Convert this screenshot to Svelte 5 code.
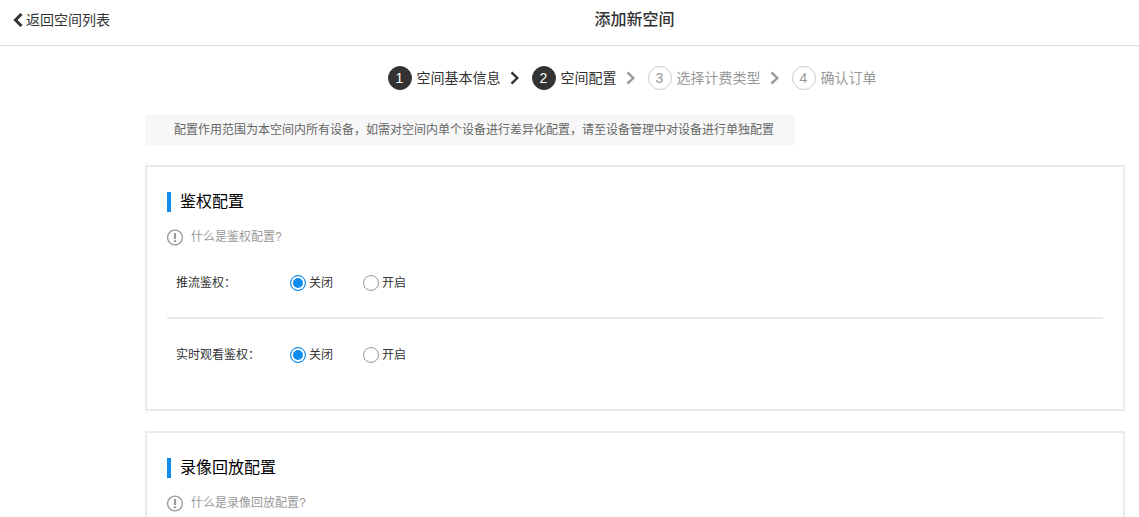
<script>
  let steps = [
    { name: "空间基本信息", done: true },
    { name: "空间配置", done: true },
    { name: "选择计费类型", done: false },
    { name: "确认订单", done: false }
  ];

  let sections = [
    {
      title: "鉴权配置",
      help: "什么是鉴权配置?",
      rows: [
        { id: "push", label: "推流鉴权：", value: "off" },
        { id: "live", label: "实时观看鉴权：", value: "off" }
      ]
    },
    {
      title: "录像回放配置",
      help: "什么是录像回放配置?",
      rows: []
    }
  ];
</script>

<style>
  :global(body) {
    background-color: #fff;
  }
  .page {
    height: 100vh;
    overflow: hidden;
    color: #333;
    font-family: "Liberation Sans", "Noto Sans CJK SC", sans-serif;
    font-size: 12px;
    line-height: 20px;
  }
  header {
    display: grid;
    grid-template-columns: 130px 1fr;
    align-items: center;
    height: 45px;
    border-bottom: 1px solid #ddd;
  }
  .back {
    display: flex;
    align-items: center;
    gap: 3px;
    padding: 0 0 5px 13px;
    color: #333;
    font-size: 14px;
    text-decoration: none;
    white-space: nowrap;
  }
  h1 {
    margin: 0;
    padding-bottom: 6px;
    font-size: 16px;
    font-weight: 500;
    text-align: center;
  }
  main {
    margin-left: 130px;
    padding: 20px 14px 20px 15px;
  }
  .steps {
    display: flex;
    justify-content: center;
    margin: 0 6px 25px 0;
    padding: 0;
    list-style: none;
    font-size: 14px;
  }
  .steps li {
    display: flex;
    align-items: center;
    color: #999;
  }
  .steps li.done {
    color: #333;
  }
  .number {
    box-sizing: border-box;
    width: 24px;
    height: 24px;
    margin-right: 5px;
    border: 1px solid #ccc;
    border-radius: 50%;
    line-height: 22px;
    text-align: center;
  }
  .done .number {
    border-color: #333;
    background-color: #333;
    color: #fff;
  }
  .arrow {
    margin: 0 12px 0 9px;
  }
  .notice {
    width: fit-content;
    margin: 0 0 20px;
    padding: 5px 21px 5px 29px;
    background-color: #f7f7f7;
    color: #666;
  }
  .card {
    margin-bottom: 20px;
    padding: 25px 20px 18px;
    border: 2px solid #ebebeb;
  }
  h2 {
    margin: 0 0 15px;
    padding-left: 9px;
    border-left: 4px solid #108cee;
    color: #000;
    font-size: 16px;
    font-weight: 400;
  }
  .help {
    display: flex;
    align-items: center;
    gap: 7px;
    width: fit-content;
    color: #999;
    text-decoration: none;
  }
  fieldset {
    display: flex;
    align-items: center;
    box-sizing: border-box;
    height: 72px;
    margin: 0;
    padding: 0 0 0 9px;
    border: 0;
  }
  .row + .row {
    border-top: 2px solid #ebebeb;
    margin-top: -2px;
  }
  .name {
    width: 114px;
  }
  label {
    display: flex;
    align-items: center;
    gap: 3px;
    margin-right: 30px;
    cursor: pointer;
  }
  input {
    appearance: none;
    box-sizing: border-box;
    width: 16px;
    height: 16px;
    margin: 0;
    border: 1px solid #999;
    border-radius: 50%;
    background-color: #fff;
  }
  input:checked {
    border-color: #108cee;
    background-color: #108cee;
    box-shadow: inset 0 0 0 2px #fff;
  }
</style>

<div class="page">
  <header>
    <a class="back" href="#spaces">
      <svg width="10" height="14" viewBox="0 0 10 14" fill="none" stroke="currentColor" stroke-width="3">
        <path d="M8.5 1 L2.5 7 L8.5 13" />
      </svg>返回空间列表</a>
    <h1>添加新空间</h1>
  </header>

  <main>
    <ol class="steps">
      {#each steps as step, i}
        <li class:done={step.done}>
          <span class="number">{i + 1}</span>
          <span>{step.name}</span>
          {#if i < steps.length - 1}
            <svg class="arrow" width="10" height="14" viewBox="0 0 10 14" fill="none" stroke={i === 0 ? "#333" : "#999"} stroke-width="2.4">
              <path d="M1.5 1.3 L7.3 7 L1.5 12.7" />
            </svg>
          {/if}
        </li>
      {/each}
    </ol>

    <p class="notice">配置作用范围为本空间内所有设备，如需对空间内单个设备进行差异化配置，请至设备管理中对设备进行单独配置</p>

    {#each sections as section}
      <section class="card">
        <h2>{section.title}</h2>
        <a class="help" href="#help">
          <svg width="17" height="17" viewBox="0 0 17 17" fill="none" stroke="currentColor">
            <circle cx="8" cy="8.5" r="7.4" stroke-width="1.3" />
            <path d="M8 4 V10 M8 11.2 V13.2" stroke-width="2.2" />
          </svg>
          {section.help}
        </a>
        {#each section.rows as row}
          <div class="row">
            <fieldset aria-label={row.label}>
              <span class="name">{row.label}</span>
              <label><input type="radio" name={row.id} value="off" bind:group={row.value} />关闭</label>
              <label><input type="radio" name={row.id} value="on" bind:group={row.value} />开启</label>
            </fieldset>
          </div>
        {/each}
      </section>
    {/each}
  </main>
</div>
